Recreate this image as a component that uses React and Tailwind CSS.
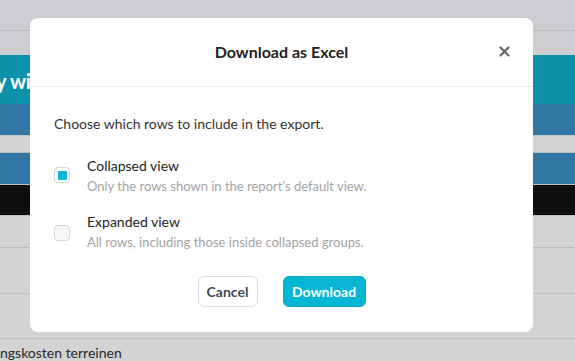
import React from "react";

export default function App() {
  const font = { fontFamily: "Lato, 'Noto Sans', sans-serif" };
  return (
    <div className="relative w-[575px] h-[361px] overflow-hidden bg-[#d3d3d3]" style={font}>
      {/* background page */}
      <div className="flex flex-col">
        <div className="h-[30px] bg-[#cdcdd1]" />
        <div className="h-[1px] bg-[#bcbcc0]" />
        <div className="h-[24px] bg-[#cdcdd1]" />
        <div className="h-[49px] bg-[#0c91aa] flex items-center">
          <span className="text-white font-bold text-[20px] ml-[-4px] mt-[2px] tracking-[-0.3px]">y with</span>
        </div>
        <div className="h-[31px] bg-[#3077a6]" />
        <div className="h-[17px] bg-[#d3d3d3] border-t border-[#c4c4c4]" />
        <div className="h-[1px] bg-[#bdbdbd]" />
        <div className="h-[31px] bg-[#3077a6]" />
        <div className="h-[1px] bg-[#bdbdbd]" />
        <div className="h-[30px] bg-[#0e0e0e]" />
        <div className="h-[1px] bg-[#bdbdbd]" />
        <div className="h-[31px] bg-[#d3d3d3]" />
        <div className="h-[1px] bg-[#bdbdbd]" />
        <div className="h-[45px] bg-[#d3d3d3]" />
        <div className="h-[1px] bg-[#bdbdbd]" />
        <div className="h-[44px] bg-[#d3d3d3]" />
        <div className="h-[1px] bg-[#bdbdbd]" />
        <div className="h-[22px] bg-[#d3d3d3] flex items-end">
          <span className="text-[14px] text-[#2a2a2a] leading-[20px] mb-[-2px]">ngskosten terreinen</span>
        </div>
      </div>

      {/* modal */}
      <div className="absolute left-[30px] top-[18px] w-[503px] h-[314px] bg-white rounded-[8px] flex flex-col">
        <div className="relative h-[69px] flex items-center justify-center border-b border-[#ececec]">
          <span className="text-[16px] font-bold text-[#222222]">Download as Excel</span>
          <svg className="absolute left-[469px] top-[28px]" width="11" height="11" viewBox="0 0 11 11">
            <path d="M1.5 1.5 L9.5 9.5 M9.5 1.5 L1.5 9.5" stroke="#666666" strokeWidth="2.2" strokeLinecap="round" />
          </svg>
        </div>
        <div className="flex flex-col px-[24px] pt-[27px]">
          <p className="text-[14px] text-[#333333] leading-[20px]">Choose which rows to include in the export.</p>
          <div className="flex flex-col gap-[16px] mt-[22px]">
            <div className="flex items-start gap-[17px]">
              <div className="mt-[11px] w-[16px] h-[16px] rounded-[4px] border border-[#c9d7de] bg-white flex items-center justify-center">
                <div className="w-[9px] h-[9px] bg-[#06b6d4] rounded-[1px]" />
              </div>
              <div className="flex flex-col">
                <span className="text-[14px] text-[#222222] leading-[20px]">Collapsed view</span>
                <span className="text-[13px] text-[#a3a3a3] leading-[20px]">Only the rows shown in the report's default view.</span>
              </div>
            </div>
            <div className="flex items-start gap-[17px]">
              <div className="mt-[13px] w-[16px] h-[16px] rounded-[4px] border border-[#d6d6d6] bg-[#f7f7f7]" />
              <div className="flex flex-col">
                <span className="text-[14px] text-[#222222] leading-[20px]">Expanded view</span>
                <span className="text-[13px] text-[#a3a3a3] leading-[20px]">All rows, including those inside collapsed groups.</span>
              </div>
            </div>
          </div>
          <div className="flex justify-center gap-[25px] mt-[24px]">
            <button className="w-[60px] h-[31px] rounded-[6px] border border-[#d3dbe6] bg-white text-[14px] font-bold text-[#3f4a5a]">Cancel</button>
            <button className="w-[83px] h-[31px] rounded-[6px] border border-[#0aa2bd] bg-[#06b6d4] text-[14px] font-bold text-white">Download</button>
          </div>
        </div>
      </div>
    </div>
  );
}
